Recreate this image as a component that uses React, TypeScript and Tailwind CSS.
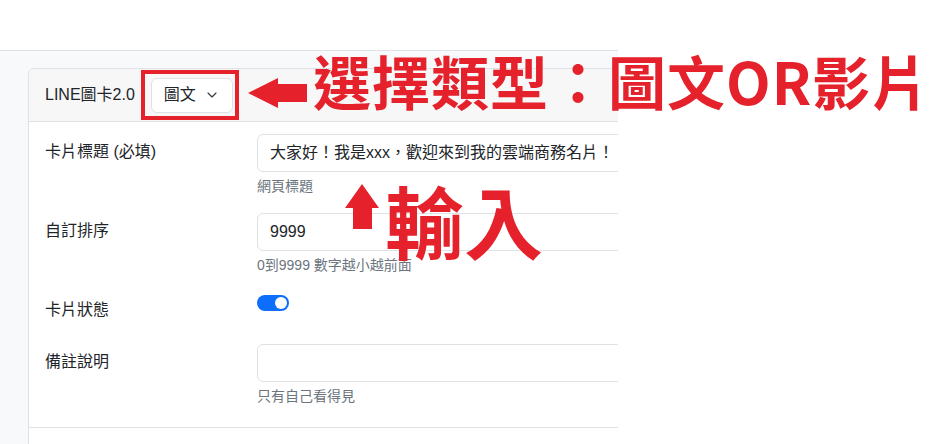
import { ChevronDown } from "lucide-react";

const font = "font-['Liberation_Sans','Noto_Sans_CJK_TC',sans-serif]";

function FieldInput({ value, hint }: { value?: string; hint: string }) {
  return (
    <div className="flex flex-1 flex-col">
      <div className="flex h-[38px] items-center rounded-md border border-[#dee2e6] bg-white px-3 text-base text-[#212529]">
        {value}
      </div>
      <p className="mt-[4px] text-sm leading-5 text-[#6c757d]">{hint}</p>
    </div>
  );
}

export default function App() {
  return (
    <div className={`relative h-[444px] w-[950px] overflow-hidden bg-white text-[#212529] ${font}`}>
      {/* 截圖裡的後台畫面，右側被裁掉 */}
      <div className="flex h-full w-[618px] flex-col overflow-hidden">
        <div className="h-[51px] shrink-0 border-b border-[#dee2e6] bg-white" />
        <div className="flex-1 bg-[#f8f9fa] pl-[28px] pt-[17px]">
          <div className="w-[900px] rounded-md border border-[#dee2e6] bg-white">
            <div className="flex h-[53px] items-center rounded-t-md border-b border-[#dee2e6] bg-[#f7f7f8] px-4">
              <span className="text-base">LINE圖卡2.0</span>
              <div className="ml-4 flex h-[35px] w-[82px] items-center justify-between rounded-md border border-[#dee2e6] bg-white pl-3 pr-[12px] text-base">
                <span>圖文</span>
                <ChevronDown size={16} strokeWidth={1.75} className="text-[#343a40]" />
              </div>
            </div>

            <div className="px-4 pb-[21px] pt-[12px]">
              <div className="flex items-start">
                <label className="w-[212px] pt-[6px] text-base leading-6">卡片標題 (必填)</label>
                <FieldInput value="大家好！我是xxx，歡迎來到我的雲端商務名片！" hint="網頁標題" />
              </div>
              <div className="mt-[17px] flex items-start">
                <label className="w-[212px] pt-[6px] text-base leading-6">自訂排序</label>
                <FieldInput value="9999" hint="0到9999 數字越小越前面" />
              </div>
              <div className="mt-[16px] flex items-start">
                <label className="w-[212px] pt-[7px] text-base leading-6">卡片狀態</label>
                <div className="flex h-6 items-start pt-[4px]">
                  <div className="flex h-4 w-8 items-center justify-end rounded-full bg-[#0d6efd] pr-[2px]">
                    <div className="h-3 w-3 rounded-full bg-white" />
                  </div>
                </div>
              </div>
              <div className="mt-[22px] flex items-start">
                <label className="w-[212px] pt-[6px] text-base leading-6">備註說明</label>
                <FieldInput hint="只有自己看得見" />
              </div>
            </div>
            <div className="h-6 border-t border-[#dee2e6]" />
          </div>
        </div>
      </div>

      {/* 標註 */}
      <div className="absolute left-[141px] top-[70px] h-[50px] w-[98px] border-4 border-[#e5222b]" />
      <svg className="absolute left-[248px] top-[78px]" width="59" height="30" viewBox="0 0 59 30">
        <polygon points="0,15 30,0 30,6 59,6 59,24 30,24 30,30" fill="#e5222b" />
      </svg>
      <div className="absolute left-[313px] top-[51px] whitespace-nowrap font-['Noto_Sans_CJK_TC',sans-serif] text-[58px] font-semibold leading-none tracking-[1px] text-[#e5222b]">
        選擇類型：圖文OR影片
      </div>
      <svg className="absolute left-[345px] top-[184px]" width="34" height="45" viewBox="0 0 34 45">
        <polygon points="17,0 34,24 27,24 27,45 8,45 8,24 0,24" fill="#e5222b" />
      </svg>
      <div className="absolute left-[385px] top-[180px] whitespace-nowrap font-['Noto_Sans_CJK_TC',sans-serif] text-[79px] font-bold leading-none text-[#e5222b]">
        輸入
      </div>
    </div>
  );
}
